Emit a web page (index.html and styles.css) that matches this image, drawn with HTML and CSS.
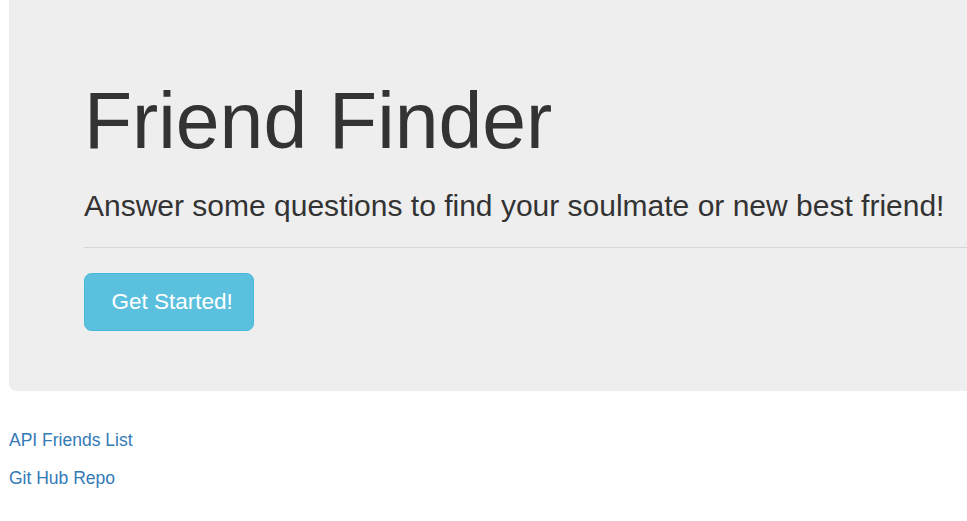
FILE: index.html
```html
<!DOCTYPE html>
<html lang="en">
<head>
<meta charset="utf-8">
<title>Friend Finder</title>
<link rel="stylesheet" href="styles.css">
</head>
<body>
<div class="page">
  <div class="jumbotron">
    <h1 class="title">Friend Finder</h1>
    <h3 class="subtitle">Answer some questions to find your soulmate or new best friend!</h3>
    <hr class="divider">
    <a class="btn-start" href="#">Get Started!</a>
  </div>
  <p class="link-row"><a class="link" href="#">API Friends List</a></p>
  <p class="link-row"><a class="link" href="#">Git Hub Repo</a></p>
</div>
</body>
</html>
```
FILE: styles.css
```css
html, body {
  margin: 0;
  padding: 0;
  background: #fff;
  overflow: hidden;
}
body {
  font-family: "Liberation Sans", Arial, Helvetica, sans-serif;
  font-size: 17.5px;
  line-height: 25px;
  color: #333;
}
.page {
  padding-left: 9px;
}
.jumbotron {
  background: #eeeeee;
  margin-right: -30px;
  padding: 52.5px 30px 60.5px 75px;
  border-radius: 0 0 0 7.5px;
  margin-bottom: 37px;
}
.title {
  font-size: 78.75px;
  line-height: 1.1;
  font-weight: 400;
  margin: 25px 0 12.5px;
  color: #333;
}
.subtitle {
  font-size: 30px;
  line-height: 33px;
  font-weight: 400;
  margin: 25px 0 12.5px;
  color: #333;
}
.divider {
  border: 0;
  border-top: 1.25px solid #d6d6d6;
  margin: 25px 0;
  height: 0;
}
.btn-start {
  display: inline-block;
  box-sizing: border-box;
  height: 57.5px;
  padding: 12.5px 20px 12.5px 26.5px;
  font-size: 22.5px;
  line-height: 30px;
  color: #fff;
  background: #5bc0de;
  border: 1.25px solid #46b8da;
  border-radius: 7.5px;
  text-decoration: none;
}
.link-row {
  margin: 0 0 12.5px;
}
.link {
  color: #337ab7;
  text-decoration: none;
}
```
